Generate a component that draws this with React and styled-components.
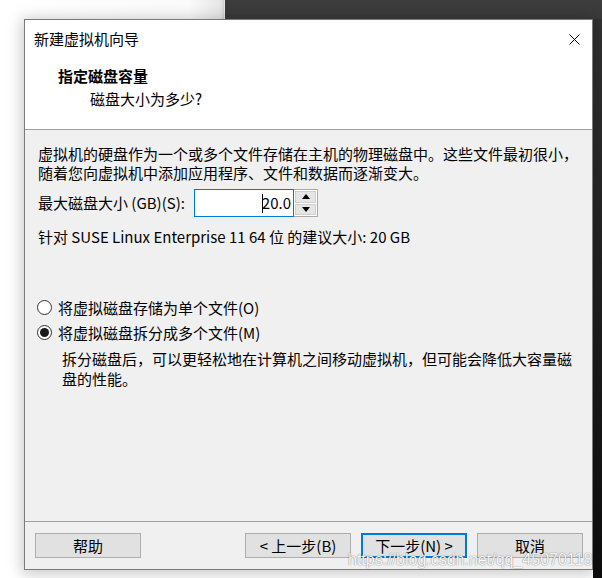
import React from 'react';
import styled, { createGlobalStyle } from 'styled-components';

const GlobalStyle = createGlobalStyle`
  html, body {
    margin: 0;
    padding: 0;
  }
  body {
    font-family: "Noto Sans CJK SC", "Noto Sans", sans-serif;
    font-size: 15px;
    color: #000;
  }
`;

// Desktop behind the dialog
const Screen = styled.div`
  position: relative;
  width: 602px;
  height: 578px;
  box-sizing: border-box;
  padding: 19px 0 0 24px;
  overflow: hidden;
  background:
    linear-gradient(#3d3d3d, #3a3a3a) right top / 377px 19px no-repeat,
    linear-gradient(#333, #0d0d0d) right top / 9px 100% no-repeat,
    linear-gradient(90deg, #fff 0, #fafafa 190px, #e6e6e6 221px, #cfcfcf 224px, #fff 225px) left top / 225px 19px no-repeat,
    #fff;
`;

const Dialog = styled.div`
  width: 569px;
  height: 551px;
  box-sizing: border-box;
  border: 1px solid #7a7a7a;
  background: #f0f0f0;
  display: flex;
  flex-direction: column;
  box-shadow: 0 2px 14px 2px rgba(0, 0, 0, 0.22);
`;

const TitleBar = styled.div`
  height: 38px;
  flex-shrink: 0;
  display: flex;
  align-items: center;
  justify-content: space-between;
  padding: 0 12px 0 9px;
  background: #fff;
  line-height: 20px;
`;

const CloseIcon = styled.svg`
  width: 11px;
  height: 11px;
  display: block;
`;

const Header = styled.div`
  flex-shrink: 0;
  background: #fff;
  padding: 8px 0 20px 33px;
  border-bottom: 1px solid #a0a0a0;
`;

const Heading = styled.div`
  font-weight: bold;
  line-height: 20px;
`;

const Subheading = styled.div`
  margin: 3px 0 0 32px;
  line-height: 20px;
`;

const Body = styled.div`
  flex: 1;
  padding: 14px 13px 0 13px;
`;

const Para = styled.div`
  line-height: 19px;
  white-space: nowrap;
  margin-top: ${(p) => p.$top || 0}px;
`;

const SizeRow = styled.div`
  display: flex;
  align-items: center;
  margin-top: 7px;
  height: 28px;
`;

const SizeLabel = styled.label`
  width: 156px;
  flex-shrink: 0;
  line-height: 20px;
  white-space: nowrap;
`;

const NumberBox = styled.div`
  width: 100px;
  height: 28px;
  box-sizing: border-box;
  border: 1px solid #0078d7;
  background: #fff;
  display: flex;
  align-items: center;
  justify-content: flex-end;
  padding-right: 2px;
  line-height: 20px;
`;

const Caret = styled.span`
  display: inline-block;
  width: 1px;
  height: 19px;
  background: #000;
  margin-right: -1px;
`;

const Spinner = styled.div`
  width: 24px;
  height: 28px;
  box-sizing: border-box;
  border: 1px solid #a9a9a9;
  border-left: none;
  background: #fff;
  display: flex;
  flex-direction: column;
  padding: 1px;
  gap: 1px;
`;

const SpinButton = styled.div`
  flex: 1;
  background: #e5e5e5;
  border: 1px solid #cfcfcf;
  display: flex;
  align-items: center;
  justify-content: center;
`;

const Arrow = styled.svg`
  width: 8px;
  height: 5px;
  display: block;
`;

const RadioList = styled.div`
  margin-top: 49px;
`;

const RadioRow = styled.div`
  display: flex;
  align-items: center;
  height: 25px;
  line-height: 20px;
  white-space: nowrap;
`;

const RadioCircle = styled.span`
  width: 15px;
  height: 15px;
  box-sizing: border-box;
  margin: 0 6px 0 -1px;
  border-radius: 50%;
  border: 1px solid #333;
  background: #fff;
  display: flex;
  align-items: center;
  justify-content: center;
  &::after {
    content: '';
    width: 9px;
    height: 9px;
    border-radius: 50%;
    background: ${(p) => (p.$checked ? '#1a1a1a' : 'transparent')};
  }
`;

const RadioNote = styled.div`
  margin: 4px 0 0 24px;
  line-height: 20px;
  white-space: nowrap;
`;

const Footer = styled.div`
  flex-shrink: 0;
  border-top: 1px solid #a0a0a0;
  padding: 11px 9px 11px 10px;
  display: flex;
  gap: 10px;
`;

const Spacer = styled.div`
  flex: 1;
`;

const Button = styled.button`
  width: 106px;
  height: 25px;
  box-sizing: border-box;
  padding: 0;
  border: ${(p) => (p.$default ? '2px solid #0078d7' : '1px solid #adadad')};
  background: #e1e1e1;
  font-family: "Noto Sans CJK SC", "Noto Sans", sans-serif;
  font-size: 15px;
  line-height: 20px;
  color: #000;
  white-space: nowrap;
`;

const Watermark = styled.div`
  position: absolute;
  left: 348px;
  top: 550px;
  font-family: "Liberation Sans", Arial, sans-serif;
  font-size: 16px;
  line-height: 20px;
  color: rgba(255, 255, 255, 0.95);
  text-shadow: 0 0 1px rgba(0, 0, 0, 0.45), 0 0 2px rgba(0, 0, 0, 0.2);
  white-space: nowrap;
  pointer-events: none;
`;

const App = () => {
  return (
    <>
      <GlobalStyle />
      <Screen>
        <Dialog>
          <TitleBar>
            <span>新建虚拟机向导</span>
            <CloseIcon viewBox="0 0 11 11">
              <path d="M0.5 0.5 L10.5 10.5 M10.5 0.5 L0.5 10.5" stroke="#000" strokeWidth="1" fill="none" />
            </CloseIcon>
          </TitleBar>

          <Header>
            <Heading>指定磁盘容量</Heading>
            <Subheading>磁盘大小为多少?</Subheading>
          </Header>

          <Body>
            <Para>虚拟机的硬盘作为一个或多个文件存储在主机的物理磁盘中。这些文件最初很小，</Para>
            <Para>随着您向虚拟机中添加应用程序、文件和数据而逐渐变大。</Para>

            <SizeRow>
              <SizeLabel>最大磁盘大小 (GB)(S):</SizeLabel>
              <NumberBox>
                <Caret />
                <span>20.0</span>
              </NumberBox>
              <Spinner>
                <SpinButton>
                  <Arrow viewBox="0 0 8 5">
                    <path d="M0 5 L4 0 L8 5 Z" fill="#000" />
                  </Arrow>
                </SpinButton>
                <SpinButton>
                  <Arrow viewBox="0 0 8 5">
                    <path d="M0 0 L8 0 L4 5 Z" fill="#000" />
                  </Arrow>
                </SpinButton>
              </Spinner>
            </SizeRow>

            <Para $top={10}>针对 SUSE Linux Enterprise 11 64 位 的建议大小: 20 GB</Para>

            <RadioList>
              <RadioRow>
                <RadioCircle />
                将虚拟磁盘存储为单个文件(O)
              </RadioRow>
              <RadioRow>
                <RadioCircle $checked />
                将虚拟磁盘拆分成多个文件(M)
              </RadioRow>
              <RadioNote>
                拆分磁盘后，可以更轻松地在计算机之间移动虚拟机，但可能会降低大容量磁
                <br />
                盘的性能。
              </RadioNote>
            </RadioList>
          </Body>

          <Footer>
            <Button>帮助</Button>
            <Spacer />
            <Button>&lt; 上一步(B)</Button>
            <Button $default>下一步(N) &gt;</Button>
            <Button>取消</Button>
          </Footer>
        </Dialog>
        <Watermark>https://blog.csdn.net/qq_45070118</Watermark>
      </Screen>
    </>
  );
};

export default App;
